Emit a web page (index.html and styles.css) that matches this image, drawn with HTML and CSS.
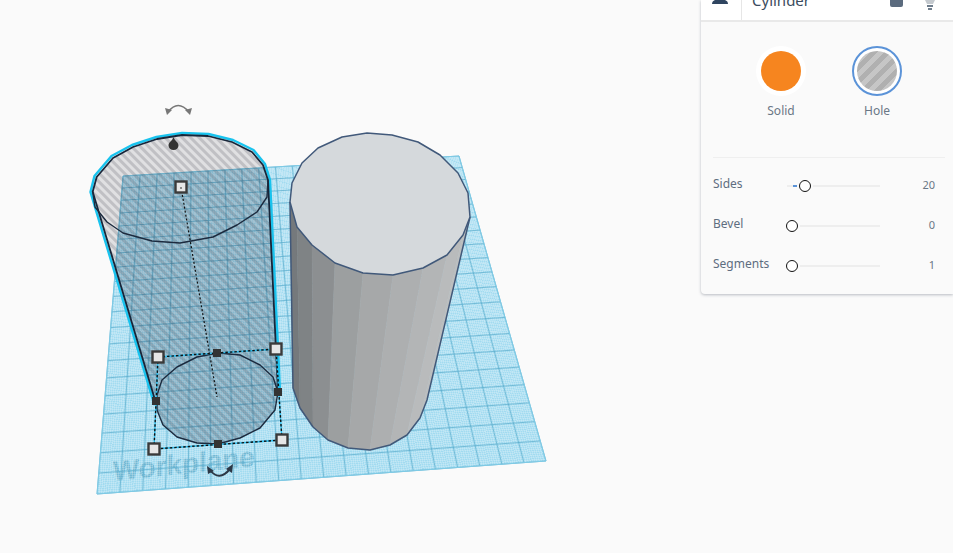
FILE: index.html
```html
<!DOCTYPE html>
<html lang="en">
<head>
<meta charset="utf-8">
<title>Cylinder</title>
<link rel="stylesheet" href="styles.css">
</head>
<body>
<main class="stage">
  <svg class="scene" width="953" height="553" viewBox="0 0 953 553" xmlns="http://www.w3.org/2000/svg">
    <defs>
      <pattern id="hatch" width="6" height="6" patternUnits="userSpaceOnUse" patternTransform="rotate(-45)">
        <rect class="hatch-a" width="6" height="6"/>
        <rect class="hatch-b" width="3" height="6"/>
      </pattern>
      <clipPath id="on-plane">
        <polygon points="123,176 459,156 546,461 97,494"/>
      </clipPath>
    </defs>
    <polygon class="plane" points="123,176 459,156 546,461 97,494"/>
    <text class="plane-label" transform="matrix(.994 -.105 0 1 113 481)">Workplane</text>
    <g id="grid-fine" class="grid-fine"></g>
    <g id="grid-major" class="grid-major"></g>
    <polygon class="plane-edge" points="123,176 459,156 546,461 97,494"/>

    <!-- solid cylinder: facets, then cap -->
    <g class="cyl">
      <polygon class="f0" points="290,202 297,227 300,408 293,388"/>
      <polygon class="f1" points="297,227 312,245 313,427 300,408"/>
      <polygon class="f2" points="312,245 335,263 328,440 313,427"/>
      <polygon class="f3" points="335,263 363,273 348,448 328,440"/>
      <polygon class="f4" points="363,273 393,275 370,450 348,448"/>
      <polygon class="f5" points="393,275 423,268 390,445 370,450"/>
      <polygon class="f6" points="423,268 447,255 407,435 390,445"/>
      <polygon class="f7" points="447,255 463,235 420,418 407,435"/>
      <polygon class="f8" points="463,235 470,217 427,400 420,418"/>
    </g>
    <polyline class="cyl-edge" points="290,202 293,388 300,408 313,427 328,440 348,448 370,450 390,445 407,435 420,418 427,400 470,217"/>
    <polygon class="cyl-cap" points="290,202 292,183 302,163 318,148 342,137 367,133 392,135 418,142 440,155 458,173 468,193 470,217 463,235 447,255 423,268 393,275 363,273 335,263 312,245 297,227"/>

    <!-- hole cylinder -->
    <polygon class="hole-fill" points="92.7,191.7 96.7,177 113,158 133,147 157,139 182,135 208,136 232,142 252,152 263,165 268,180 278,392 275,410 260,428 240,438 218,444 197,443 177,437 163,425 157,410 155,400"/>
    <g clip-path="url(#on-plane)">
      <polygon class="hole-tint" points="92.7,191.7 96.7,177 113,158 133,147 157,139 182,135 208,136 232,142 252,152 263,165 268,180 278,392 275,410 260,428 240,438 218,444 197,443 177,437 163,425 157,410 155,400"/>
    </g>
    <polyline class="hole-glow" points="155,405 153,400 90.5,192 94.5,176 111.5,156 132,145 156.5,137 182,133 208.5,134 233,140 253.5,150 265,164 270,180 280,392"/>
    <polyline class="hole-line" points="155,400 92.7,191.7 96.7,177 113,158 133,147 157,139 182,135 208,136 232,142 252,152 263,165 268,180 278,392"/>
    <polyline class="hole-thin" points="268,180 267,197 257,212 237,225 213,237 180,243 152,241 123,233 107,222 95,207 92.7,191.7"/>
    <polygon class="hole-thin" points="157,395 162,380 177,367 197,357 218,353 240,355 260,365 273,377 278,392 275,410 260,428 240,438 218,444 197,443 177,437 163,425 157,410"/>

    <!-- selection box -->
    <line class="axis" x1="181" y1="187" x2="217" y2="397"/>
    <polygon class="box-under" points="158,357 276,349 282,440 154,449"/>
    <polygon class="box-over" points="158,357 276,349 282,440 154,449"/>

    <path class="cone" d="M173.500 137 C172.500 141 168.500 142 168.500 145.500 A5 4.500 0 0 0 178.500 145.500 C178.500 142 174.500 141 173.500 137Z"/>
    <g class="rot rot-top">
      <path class="rot-arc" d="M168 112 Q178 99 189 112"/>
      <polygon class="rot-head" points="165,108 172,110 167,115"/>
      <polygon class="rot-head" points="192,108 185,110 190,115"/>
    </g>
    <g class="rot rot-bottom">
      <path class="rot-arc" d="M210 470 Q219 482 230 469"/>
      <polygon class="rot-head" points="207,466 214,471 208,474"/>
      <polygon class="rot-head" points="233,464 232,473 226,469"/>
    </g>

    <rect class="handle handle-top" x="175.500" y="181.500" width="11" height="11"/>
    <rect class="handle-dot" x="180" y="187" width="2" height="2"/>
    <rect class="handle" x="152.500" y="351.500" width="11" height="11"/>
    <rect class="handle" x="270.500" y="343.500" width="11" height="11"/>
    <rect class="handle" x="276.500" y="434.500" width="11" height="11"/>
    <rect class="handle" x="148.500" y="443.500" width="11" height="11"/>
    <rect class="mid" x="213" y="349" width="8" height="8"/>
    <rect class="mid" x="274" y="388" width="8" height="8"/>
    <rect class="mid" x="214" y="440" width="8" height="8"/>
    <rect class="mid" x="152" y="397" width="8" height="8"/>
  </svg>

  <aside class="panel">
    <header class="panel-head">
      <div class="head-row">
        <div class="head-icon">
          <svg class="shape-icon" width="16" height="16" viewBox="0 0 16 16" xmlns="http://www.w3.org/2000/svg"><path class="ico-dark" d="M5 0h6l2 11q3 1 3 4H0q0-3 3-4Z"/></svg>
        </div>
        <h1 class="head-title">Cylinder</h1>
        <span class="lock-icon"></span>
        <svg class="bulb-icon" width="12" height="24" viewBox="0 0 12 24" xmlns="http://www.w3.org/2000/svg"><path class="ico-bulb" d="M1 8h10v6l-2 4H3L1 14Z"/><rect class="ico-bulb-base" x="3" y="19" width="6" height="2"/><rect class="ico-bulb-base" x="4" y="22" width="4" height="2"/></svg>
      </div>
    </header>
    <div class="kinds">
      <div class="kind">
        <span class="swatch swatch-solid"><span class="swatch-in solid-in"></span></span>
        <span class="kind-label">Solid</span>
      </div>
      <div class="kind">
        <span class="swatch swatch-hole"><span class="swatch-in hole-in"></span></span>
        <span class="kind-label">Hole</span>
      </div>
    </div>
    <div class="params">
      <div class="param">
        <span class="param-name">Sides</span>
        <span class="slider"><span class="slider-fill"></span><span class="knob knob-sides"></span></span>
        <span class="param-value">20</span>
      </div>
      <div class="param">
        <span class="param-name">Bevel</span>
        <span class="slider"><span class="knob"></span></span>
        <span class="param-value">0</span>
      </div>
      <div class="param">
        <span class="param-name">Segments</span>
        <span class="slider"><span class="knob"></span></span>
        <span class="param-value">1</span>
      </div>
    </div>
  </aside>
</main>
<script src="grid.js"></script>
</body>
</html>
```
FILE: styles.css
```css
* { box-sizing: border-box; }
html, body { margin: 0; height: 100%; overflow: hidden; }
body { background: #fafafa; font-family: "Noto Sans", "Open Sans", sans-serif; }

.stage { position: relative; width: 953px; height: 553px; overflow: hidden; }
.scene { display: block; }

/* workplane */
.plane { fill: #a2dbf0; }
.plane-edge { fill: none; stroke: #7fcbe6; stroke-width: 1; }
.plane-label { font: bold 28px "Liberation Sans", sans-serif; fill: #62aecd; opacity: .75; }
.grid-fine line { stroke: #ffffff; stroke-width: 1; opacity: .2; shape-rendering: crispEdges; }
.grid-major line { stroke: #55abcc; stroke-width: 1; opacity: .7; }

/* solid cylinder */
.f0 { fill: #75797c; stroke: #75797c; }
.f1 { fill: #7f8385; stroke: #7f8385; }
.f2 { fill: #8c8f91; stroke: #8c8f91; }
.f3 { fill: #9c9fa0; stroke: #9c9fa0; }
.f4 { fill: #a6a8a9; stroke: #a6a8a9; }
.f5 { fill: #adafb0; stroke: #adafb0; }
.f6 { fill: #b3b5b6; stroke: #b3b5b6; }
.f7 { fill: #b9bbbc; stroke: #b9bbbc; }
.f8 { fill: #bcbebf; stroke: #bcbebf; }
.cyl polygon { stroke-width: .5; }
.cyl-edge { fill: none; stroke: #41597a; stroke-width: 1.5; stroke-linejoin: round; }
.cyl-cap { fill: #d5d9dc; stroke: #41597a; stroke-width: 1.5; stroke-linejoin: round; }

/* hole cylinder */
.hatch-a { fill: rgba(50, 50, 60, .13); }
.hatch-b { fill: rgba(50, 50, 60, .18); }
.hole-fill { fill: url(#hatch); }
.hole-tint { fill: rgba(20, 70, 100, .09); }
.hole-glow { fill: none; stroke: #19c3ee; stroke-width: 2.5; stroke-linejoin: round; }
.hole-line { fill: none; stroke: #17263a; stroke-width: 1.8; stroke-linejoin: round; }
.hole-thin { fill: none; stroke: #1c2b3f; stroke-width: 1.4; stroke-linejoin: round; }

/* selection */
.axis { stroke: #111; stroke-width: 1.2; stroke-dasharray: 2 2; }
.box-under { fill: none; stroke: #29bff0; stroke-width: 1.4; }
.box-over { fill: none; stroke: #111; stroke-width: 1.4; stroke-dasharray: 2.500 2; }
.handle { fill: #e6e6e6; stroke: #3a3a3a; stroke-width: 2.4; }
.handle-dot { fill: #8a8a8a; }
.mid { fill: #333; }
.cone { fill: #333; }
.rot-arc { fill: none; stroke-width: 1.5; }
.rot-top .rot-arc { stroke: #777; }
.rot-top .rot-head { fill: #777; }
.rot-bottom .rot-arc { stroke: #2c3846; stroke-width: 2; }
.rot-bottom .rot-head { fill: #2c3846; }

/* inspector */
.panel {
  position: absolute; top: 0; right: 0; width: 252px; height: 294px;
  background: #fafafa; border-bottom-left-radius: 4px;
  box-shadow: 0 1px 3px rgba(60, 70, 90, .35);
  display: flex; flex-direction: column;
}
.panel-head { height: 22px; background: #fff; border-bottom: 2px solid #e9e9e9; display: flex; align-items: flex-end; }
.head-row { height: 40px; width: 100%; display: flex; align-items: center; flex: none; }
.head-icon { width: 41px; height: 40px; border-right: 1px solid #e6e6e6; display: flex; align-items: flex-start; justify-content: center; padding-right: 2px; padding-top: 9px; }
.shape-icon { display: block; }
.ico-dark { fill: #2f4560; }
.head-title { margin: 0 0 0 10px; font-size: 15px; font-weight: 400; color: #3c4c5e; flex: 1; }
.lock-icon { width: 13px; height: 16px; margin-top: -3px; background: #5b6b7e; border-radius: 2px; margin-right: 21px; }
.bulb-icon { margin-right: 17px; margin-top: -4px; }
.ico-bulb { fill: #c4c9ce; }
.ico-bulb-base { fill: #6f7d8c; }

.kinds { display: flex; gap: 46px; padding: 24px 0 0 55px; height: 135px; }
.kind { width: 50px; display: flex; flex-direction: column; align-items: center; }
.swatch { width: 50px; height: 50px; border-radius: 50%; background: #fff; display: flex; align-items: center; justify-content: center; }
.swatch-hole { border: 2px solid #5b93d8; }
.swatch-in { width: 40px; height: 40px; border-radius: 50%; }
.solid-in { background: #f6851f; }
.hole-in { background: repeating-linear-gradient(135deg, #b0b0b0 0 5px, #c6c6c6 5px 10px); }
.kind-label { margin-top: 7px; font-size: 12px; line-height: 16px; color: #6a7786; }

.params { margin: 0 8px 0 12px; border-top: 1px solid #efefef; padding-top: 8px; }
.param { height: 40px; display: flex; align-items: center; padding-right: 10px; }
.param-name { width: 74px; font-size: 12px; color: #5e6d80; margin-top: -6px; }
.slider { position: relative; width: 93px; height: 2px; background: #eeeeee; }
.slider-fill { position: absolute; left: 6px; top: 0; width: 4px; height: 2px; background: #5b93d8; }
.knob { position: absolute; left: -1px; top: -5px; width: 12px; height: 12px; border-radius: 50%; background: #fff; border: 1px solid #111; box-shadow: 0 0 0 2px #fafafa; }
.knob-sides { left: 12px; }
.param-value { flex: 1; text-align: right; font-size: 11px; color: #6a7786; margin-top: -4px; }
```
FILE: grid.js
```js
// Draws the workplane grid in perspective: the plane's corners are projected from a unit square.
(function () {
  var NS = 'http://www.w3.org/2000/svg';
  var x0 = 123, y0 = 176, x1 = 459, y1 = 156, x2 = 546, y2 = 461, x3 = 97, y3 = 494;
  var dx1 = x1 - x2, dx2 = x3 - x2, dx3 = x0 - x1 + x2 - x3;
  var dy1 = y1 - y2, dy2 = y3 - y2, dy3 = y0 - y1 + y2 - y3;
  var det = dx1 * dy2 - dx2 * dy1;
  var g = (dx3 * dy2 - dx2 * dy3) / det;
  var h = (dx1 * dy3 - dx3 * dy1) / det;
  var a = x1 - x0 + g * x1, b = x3 - x0 + h * x3, c = x0;
  var d = y1 - y0 + g * y1, e = y3 - y0 + h * y3, f = y0;
  function map(u, v) {
    var w = g * u + h * v + 1;
    return [(a * u + b * v + c) / w, (d * u + e * v + f) / w];
  }
  function addLine(parent, p, q) {
    var l = document.createElementNS(NS, 'line');
    l.setAttribute('x1', p[0].toFixed(2));
    l.setAttribute('y1', p[1].toFixed(2));
    l.setAttribute('x2', q[0].toFixed(2));
    l.setAttribute('y2', q[1].toFixed(2));
    parent.appendChild(l);
  }
  function draw(id, n) {
    var parent = document.getElementById(id);
    for (var i = 0; i <= n; i++) {
      var t = i / n;
      addLine(parent, map(t, 0), map(t, 1));
      addLine(parent, map(0, t), map(1, t));
    }
  }
  draw('grid-fine', 200);
  draw('grid-major', 20);
})();
```
